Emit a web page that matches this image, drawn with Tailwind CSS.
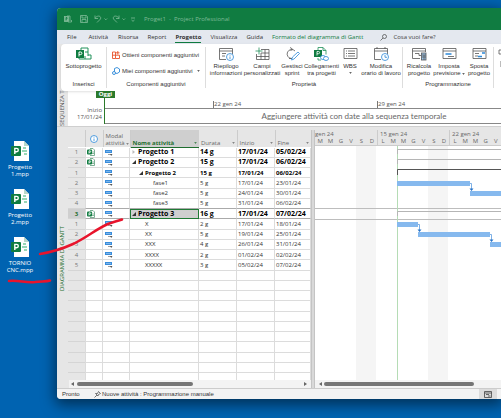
<!DOCTYPE html>
<html lang="it">
    <head>
        <meta charset="UTF-8">
        <title>Proget1 - Project Professional</title>
        <script src="https://cdn.jsdelivr.net/npm/@tailwindcss/browser@4"></script>
    </head>
    <body class="min-h-screen bg-[#0063b1] flex items-start overflow-hidden font-['Open_Sans','Noto_Sans',sans-serif] text-[6px] leading-[8px] text-[#333]">
        <!-- Shared icons -->
        <svg class="hidden">
            <symbol id="file" viewBox="0 0 18 22">
                <path d="M3 1h10l5 5v15H3z" fill="#fff"/>
                <path d="M13 1v5h5z" fill="#b9d8c9"/>
                <path d="M12 8h3M11 11h5M13 14h3" stroke="#33b06f" stroke-width="1.2"/>
                <rect y="6" width="10" height="10" rx="1" fill="#107c41"/>
                <path d="M3.8 14V8.4h1.8a1.6 1.6 0 0 1 0 3.4H3.8" fill="none" stroke="#fff" stroke-width="1.4"/>
            </symbol>
            <symbol id="sub" viewBox="0 0 16 14">
                <path d="M5 5V1h7v8M9 5h3M9 9v3h6V8h-3M3 9v3h6" fill="none" stroke="#21915a"/>
                <rect y="3" width="8" height="8" fill="#107c41"/>
                <path d="M3 9.5V5h1.600a1.3 1.3 0 0 1 0 2.600H3" fill="none" stroke="#fff"/>
            </symbol>
            <symbol id="insert" viewBox="0 0 8 8">
                <path d="M3 .5h3l1.500 1.500v5.500H3" fill="#fff" stroke="#5c9c7a" stroke-width=".8"/>
                <path d="M5 4h2M5 5.500h2" stroke="#5c9c7a" stroke-width=".7"/>
                <rect y="1.500" width="5" height="5" rx="1" fill="#107c41"/>
                <path d="M2 5.500V2.800h1a.7.7 0 0 1 0 1.500H2" fill="none" stroke="#fff" stroke-width=".8"/>
            </symbol>
            <symbol id="auto" viewBox="0 0 8 7">
                <rect y="1" width="7" height="3" fill="#3a8ddb"/>
                <path d="M1 2.500h5" stroke="#a9d0f5" stroke-width=".6"/>
                <path d="M3 5.500h4" stroke="#8a8a8a" stroke-width=".8"/>
                <path d="M5 5h2.500L6.200 7z" fill="#555"/>
            </symbol>
            <symbol id="down" viewBox="0 0 4 3"><path d="M0 .5h4L2 2.700z" fill="currentColor"/></symbol>
        </svg>

        <!-- Desktop -->
        <nav class="w-[57px] shrink-0 pl-1 pt-[140px] flex flex-col gap-[10px] text-white text-center">
            <a href="#" class="w-8 h-[38px] flex flex-col items-center leading-[7px]"><svg class="w-[18px] h-[22px] mb-[2px] shrink-0"><use href="#file"/></svg>Progetto<br>1.mpp</a>
            <a href="#" class="w-8 h-[38px] flex flex-col items-center leading-[7px]"><svg class="w-[18px] h-[22px] mb-[2px] shrink-0"><use href="#file"/></svg>Progetto<br>2.mpp</a>
            <a href="#" class="w-8 h-[38px] flex flex-col items-center leading-[7px]"><svg class="w-[18px] h-[22px] mb-[2px] shrink-0"><use href="#file"/></svg>TORNIO<br>CNC.mpp</a>
        </nav>

        <!-- Window -->
        <main class="mt-2 grow min-w-0 rounded-l-[4px] overflow-hidden bg-[#e6e6e6] shadow-[0_4px_14px_2px_rgba(0,0,0,0.5)]">
            <!-- Title bar -->
            <header class="h-[22px] bg-[#107c41] pl-[7px] flex items-center text-[#7fbb98]">
                <svg class="w-2 h-2 mr-2" viewBox="0 0 8 8" fill="none" stroke="currentColor" stroke-width=".8"><path d="M3 1h3v5M4 7h3.500V5"/><rect x=".5" y="1.500" width="4" height="5" fill="currentColor"/><path d="M2 5.500v-3h1v1.500H2" stroke="#107c41"/></svg>
                <svg class="w-2 h-2 mr-[6px]" viewBox="0 0 8 8" fill="none" stroke="currentColor" stroke-width=".8"><path d="M.5.500h6l1 1v6h-7zM2 .5v2.500h4V.5M2 7.500v-3h4v3"/></svg>
                <svg class="w-[14px] h-2 mr-1" viewBox="0 0 14 8" fill="none" stroke="currentColor" stroke-width=".8"><path d="M1 .5V3.500h3M1 3.500C3-.5 8 1 6.500 4L3 7.500M10.500 3.500l1.300 1.300 1.300-1.300"/></svg>
                <svg class="w-[14px] h-2 mr-1" viewBox="0 0 14 8" fill="none" stroke="currentColor" stroke-width=".8"><path d="M7 .5V3.500H4M7 3.500C5-.5 0 1 1.500 4L5 7.500M10.500 3.500l1.300 1.300 1.300-1.300"/></svg>
                <svg class="w-[6px] h-2 mr-2" viewBox="0 0 6 8" fill="none" stroke="currentColor" stroke-width=".8"><path d="M1 3h4M1.500 5L3 6.300 4.500 5"/></svg>
                <h1 class="whitespace-pre">Proget1  -  Project Professional</h1>
            </header>

            <!-- Ribbon tabs -->
            <nav class="h-[14px] bg-[#e4e8ef] pl-[10px] flex items-center whitespace-nowrap">
                <button class="mr-3">File</button>
                <button class="mr-[10px]">Attività</button>
                <button class="mr-[9px]">Risorsa</button>
                <button class="mr-[9px]">Report</button>
                <button class="mr-[9px] h-3 font-bold border-b border-[#107c41]">Progetto</button>
                <button class="mr-[9px]">Visualizza</button>
                <button class="mr-[9px]">Guida</button>
                <button class="mr-[17px] text-[#107c41]">Formato del diagramma di Gantt</button>
                <svg class="w-[7px] h-[7px] mr-[6px]" viewBox="0 0 7 7" fill="none" stroke="#444" stroke-width=".7"><circle cx="4.500" cy="2.500" r="2"/><path d="M3 4L.5 6.500"/></svg>
                <input type="text" aria-label="Cerca" placeholder="Cosa vuoi fare?" class="w-20 placeholder:text-[#444] outline-none">
            </nav>

            <!-- Ribbon -->
            <section class="ml-1 h-[47px] bg-white rounded-l-[4px] shadow flex py-[3px] overflow-hidden text-center leading-[7px] font-['Liberation_Sans',sans-serif] relative">
                <div class="w-[46px] shrink-0 border-r border-[#ddd] flex flex-col justify-between">
                    <button class="flex flex-col items-center gap-[2px]"><svg class="w-4 h-[14px]"><use href="#sub"/></svg>Sottoprogetto</button>
                    <h2>Inserisci</h2>
                </div>
                <div class="w-[99px] shrink-0 border-r border-[#ddd] flex flex-col justify-between">
                    <div class="pl-[5px] pt-1 flex flex-col gap-2">
                        <button class="flex items-center gap-[2px]"><svg class="w-2 h-2" viewBox="0 0 8 8" fill="none" stroke="#e8532b" stroke-width=".9"><path d="M.5 1h3v6.500h-3zM.5 4.200h7v3.300h-4M5.800 0v3.500M4 1.800h3.500"/></svg>Ottieni componenti aggiuntivi</button>
                        <button class="flex items-center gap-[2px]"><svg class="w-2 h-2" viewBox="0 0 8 8" fill="none" stroke="#2b88d8" stroke-width=".9"><path d="M2.500 4.500V1.500L5 .5l2.500 1.500v3L5 6.500 3.500 6"/><circle cx="2" cy="6" r="1.500"/></svg>Miei componenti aggiuntivi<svg class="w-[3px] h-[2px] ml-[2px]"><use href="#down"/></svg></button>
                    </div>
                    <h2>Componenti aggiuntivi</h2>
                </div>
                <div class="w-[197px] shrink-0 border-r border-[#ddd] flex flex-col justify-between">
                    <div class="pl-[3px] flex items-start">
                        <button class="w-[34px] flex flex-col items-center gap-[2px]"><svg class="w-[15px] h-[14px]" viewBox="0 0 15 14" fill="none" stroke="#555" stroke-width=".8"><path d="M7 12.500H.5V1.500h13V7M.5 4h13M3 6.500h4M3 9h3"/><circle cx="11" cy="10" r="3.500" stroke="#2b88d8" fill="#fff"/><path d="M11 9.500v2.500M11 7.800v.8" stroke="#2b88d8"/></svg>Riepilogo<br>informazioni</button>
                        <button class="w-[38px] flex flex-col items-center gap-[2px]"><svg class="w-[15px] h-[14px]" viewBox="0 0 15 14" fill="none" stroke="#555" stroke-width=".8"><path d="M6 2.500h8v10H1.500V7M1.500 9.500H14M6 6H14M6 6v6.500M10 2.500v10"/><path d="M4 .5v7M.5 4h7" stroke="#21915a"/></svg>Campi<br>personalizzati</button>
                        <button class="w-[22px] flex flex-col items-center gap-[2px]"><svg class="w-[15px] h-[14px]" viewBox="0 0 15 14" fill="none" stroke="#555" stroke-width=".8"><path d="M6.500 11.500A4.500 4.500 0 1 1 10 4M5 .5l2.500 1.500L5.500 4M4 11.500h3"/><path d="M6.500 13l1-3 5.500-5 1.500 1.500L9 12z" stroke="#2b88d8"/></svg>Gestisci<br>sprint</button>
                        <button class="w-[37px] flex flex-col items-center gap-[2px]"><svg class="w-[15px] h-[14px]" viewBox="0 0 15 14" fill="none" stroke="#21915a" stroke-width=".8"><path d="M4 3V.5h5l3 3v4M9 .5v3h3M4 11v2h3"/><rect y="3" width="8" height="7" fill="#107c41" stroke="none"/><path d="M3 8.500v-4h1.500a1 1 0 0 1 0 2.200H3" stroke="#fff"/><g stroke="#2b88d8" fill="#fff"><ellipse cx="9" cy="10.500" rx="2.500" ry="2"/><ellipse cx="12" cy="11.500" rx="2.500" ry="2"/></g></svg>Collegamenti<br>tra progetti</button>
                        <button class="w-5 flex flex-col items-center gap-[2px]"><svg class="w-[15px] h-[14px]" viewBox="0 0 15 14" fill="none" stroke="#555" stroke-width=".8"><path d="M1 1.500h13v10H1zM3 4h1M5 4h7M3 6.500h1M5 6.500h7M3 9h1M5 9h7"/></svg>WBS<svg class="w-[3px] h-[2px]"><use href="#down"/></svg></button>
                        <button class="w-[42px] flex flex-col items-center gap-[2px]"><svg class="w-[15px] h-[14px]" viewBox="0 0 15 14" fill="none" stroke="#555" stroke-width=".8"><path d="M7 12.500H.5V1.500h13V7M.5 4h13M3 0v2M11 0v2"/><circle cx="11" cy="10" r="3.500" stroke="#2b88d8" fill="#fff"/><path d="M11 8v2.300h2" stroke="#2b88d8"/></svg>Modifica<br>orario di lavoro</button>
                    </div>
                    <h2>Proprietà</h2>
                </div>
                <div class="w-[91px] shrink-0 border-r border-[#ddd] flex flex-col justify-between">
                    <div class="pl-[2px] flex items-start">
                        <button class="w-7 flex flex-col items-center gap-[2px]"><svg class="w-[15px] h-[14px]" viewBox="0 0 15 14" fill="none" stroke="#555" stroke-width=".8"><path d="M8 11.500H.5V1.500h13V5M.5 4h13M3 6.500h4v2h2"/><rect x="9.500" y="6" width="4.500" height="7" fill="#9ac3e8"/><path d="M10 8h4M10 10h4M12 8v5"/></svg>Ricalcola<br>progetto</button>
                        <button class="w-[32px] flex flex-col items-center gap-[2px]"><svg class="w-[15px] h-[14px]" viewBox="0 0 15 14" fill="none" stroke="#555" stroke-width=".8"><path d="M1 1.500h13v10H1zM1 4h13M6 9.500h6"/><path d="M3.500 7h6" stroke="#2b88d8" stroke-width="1.500"/></svg><span class="-mb-[2px]">Imposta</span><span class="flex items-center gap-px">previsione<svg class="w-[3px] h-[2px]"><use href="#down"/></svg></span></button>
                        <button class="w-7 flex flex-col items-center gap-[2px]"><svg class="w-[15px] h-[14px]" viewBox="0 0 15 14" fill="none" stroke="#555" stroke-width=".8"><path d="M1 1.500h13v10H1zM1 4h13M3 6.500h4M3 9h3"/><path d="M10 6h3M6 9.500h4" stroke="#2b88d8" stroke-width="1.500"/></svg>Sposta<br>progetto</button>
                    </div>
                    <h2>Programmazione</h2>
                </div>
                <svg class="w-5 h-[30px] shrink-0 ml-1" viewBox="0 0 20 30" fill="none" stroke="#555" stroke-width=".8"><path d="M1 3h8v4H1zM3 14h8v6H3z"/></svg>
            </section>

            <!-- Timeline -->
            <section class="flex h-9 border-b border-[#cfcfcf]">
                <h2 class="w-[11px] shrink-0 rotate-180 [writing-mode:vertical-rl] leading-[11px] text-[#555] whitespace-nowrap">SEQUENZA T</h2>
                <div class="w-9 shrink-0 bg-white pt-4 pr-[2px] text-right leading-[7px] text-[#555]">Inizio<br>17/01/24</div>
                <div class="grow min-w-0 bg-white relative">
                    <span class="absolute left-[-8px] top-0 w-[19px] h-[7px] bg-[#2b7a2b] text-white font-bold text-center leading-[7px]">Oggi</span>
                    <div class="ml-px h-[18px] pt-[10px] flex border-b border-[#888] text-[#555]">
                        <span class="ml-[108px] w-[164px] h-[7px] border-l border-[#777] leading-[7px]">22 gen 24</span>
                        <span class="h-[7px] border-l border-[#777] leading-[7px]">29 gen 24</span>
                    </div>
                    <p class="ml-px h-[15px] border-b border-[#888] text-center font-[Lato,sans-serif] text-[8px] leading-[14px] text-[#666] pl-[102px]">Aggiungere attività con date alla sequenza temporale</p>
                    <i class="absolute left-0 top-[7px] w-px h-[26px] bg-[#2b7a2b]"></i>
                </div>
            </section>

            <!-- Gantt diagram -->
            <section class="mt-[3px] h-[258px] flex overflow-hidden">
                <h2 class="w-[11px] shrink-0 rotate-180 [writing-mode:vertical-rl] text-center leading-[11px] text-[#1f6e2f] whitespace-nowrap">DIAGRAMMA DI GANTT</h2>

                <div class="w-[243px] shrink-0 flex flex-col">
                    <div class="h-[250px] overflow-hidden">
                        <table class="w-full table-fixed border-collapse bg-white whitespace-nowrap">
                            <colgroup><col class="w-[17px]"><col class="w-[18px]"><col class="w-[27px]"><col class="w-[69px]"><col class="w-[38px]"><col class="w-[38px]"><col class="w-[36px]"></colgroup>
                            <thead class="bg-[#e6e6e6] text-[#666] text-left">
                                <tr class="h-[17px] align-bottom">
                                    <th class="p-0"></th>
                                    <th class="p-0 border-x border-[#ccc] align-middle"><svg class="w-2 h-2 mx-auto" viewBox="0 0 8 8" fill="#fff" stroke="#2b88d8" stroke-width=".8"><circle cx="4" cy="4" r="3.500"/><path d="M4 3.500v2.500M4 1.800v.8"/></svg></th>
                                    <th class="p-0 pl-[2px] font-normal leading-[7px] border-r border-[#ccc]">Modal<span class="flex items-center gap-px">attività<svg class="w-[3px] h-[2px]"><use href="#down"/></svg></span></th>
                                    <th class="p-0 px-[2px] bg-[#cfcfcf] text-[#1f6e2f] border-b border-[#1f6e2f]"><span class="flex justify-between items-center">Nome attività<svg class="w-[3px] h-[2px]"><use href="#down"/></svg></span></th>
                                    <th class="p-0 px-[2px] font-normal border-r border-[#ccc]"><span class="flex justify-between items-center">Durata<svg class="w-[3px] h-[2px]"><use href="#down"/></svg></span></th>
                                    <th class="p-0 px-[2px] font-normal border-r border-[#ccc]"><span class="flex justify-between items-center">Inizio<svg class="w-[3px] h-[2px]"><use href="#down"/></svg></span></th>
                                    <th class="p-0 px-[2px] font-normal"><span class="flex justify-between items-center">Fine<svg class="w-[3px] h-[2px]"><use href="#down"/></svg></span></th>
                                </tr>
                            </thead>
                        </table>
                        <table class="w-full h-[236px] table-fixed border-separate border-spacing-0 bg-white whitespace-nowrap leading-[8px] text-[#333]">
                            <colgroup><col class="w-[17px]"><col class="w-[18px]"><col class="w-[27px]"><col class="w-[69px]"><col class="w-[38px]"><col class="w-[38px]"><col class="w-[36px]"></colgroup>
                            <tbody id="tasks"></tbody>
                        </table>
                    </div>
                    <div class="h-2 flex items-center bg-[#f3f3f3] ml-px pl-[2px] pr-1">
                        <svg class="w-[3px] h-1" viewBox="0 0 3 4"><path d="M3 0v4L0 2z" fill="#666"/></svg>
                        <i class="ml-[3px] w-[116px] h-1 rounded-full bg-[#757575]"></i>
                        <svg class="w-[3px] h-1 ml-auto" viewBox="0 0 3 4"><path d="M0 0v4l3-2z" fill="#666"/></svg>
                    </div>
                </div>

                <div class="w-1 shrink-0 bg-[#d9d9d9] border-x border-[#c4c4c4]"></div>

                <div class="grow min-w-0 flex flex-col">
                    <div class="h-4 flex shrink-0 overflow-hidden text-[#666] border-b border-[#ccc]">
                        <div class="w-[62px] shrink-0">
                            <p>gen 24</p>
                            <p class="grid grid-cols-6 text-center leading-[7px]"><span>M</span><span>M</span><span>G</span><span>V</span><span>S</span><span>D</span></p>
                        </div>
                        <div class="w-[72px] shrink-0 border-l border-[#ccc]">
                            <p class="pl-[2px]">15 gen 24</p>
                            <p class="grid grid-cols-7 text-center leading-[7px]"><span>L</span><span>M</span><span>M</span><span>G</span><span>V</span><span>S</span><span>D</span></p>
                        </div>
                        <div class="w-[52px] shrink-0 border-l border-[#ccc]">
                            <p class="pl-[2px]">22 gen 24</p>
                            <p class="grid grid-cols-5 text-center leading-[7px]"><span>L</span><span>M</span><span>M</span><span>G</span><span>V</span></p>
                        </div>
                    </div>
                    <div class="h-[234px] bg-white overflow-hidden">
                        <svg class="w-[1600px] h-[234px] max-w-none" viewBox="0 0 1600 234">
                            <path d="M41 0h20v234H41zM113 0h20v234h-20z" fill="#f5f5f5"/>
                            <path d="M0 62.500h1600M0 73.500h1600" stroke="#bdbdbd"/>
                            <path d="M82.500 0v234" stroke="#b5dcb5"/>
                            <path d="M82.500 8V3.500H1600M82.500 18v-4.500H1600M82.500 70v-4.500H1600" fill="none" stroke="#b5b5b5"/>
                            <path d="M82.500 29v-5.500H1600" fill="none" stroke="#555"/>
                            <path d="M82 35h73v5H82zM155 45h73v5h-73zM82 76h21v5H82zM103 86h72v5h-72zM175 96h60v5h-60z" fill="#86b9ee"/>
                            <path d="M155 37.500h1.500V44M103 78.500h1.500V85M175 88.500h1.500V95" fill="none" stroke="#5d9ddf" stroke-width=".8"/>
                            <path d="M154.500 42.500h4l-2 2.500zM102.500 83.500h4l-2 2.500zM174.500 93.500h4l-2 2.500z" fill="#2472c8"/>
                        </svg>
                    </div>
                    <div class="h-2 flex items-center bg-[#f3f3f3] pl-1">
                        <svg class="w-[3px] h-1 shrink-0" viewBox="0 0 3 4"><path d="M3 0v4L0 2z" fill="#666"/></svg>
                        <i class="ml-[2px] w-[150px] h-1 rounded-full bg-[#757575]"></i>
                    </div>
                </div>
            </section>

            <!-- Status bar -->
            <footer class="h-[11px] bg-[#f3f3f3] border-t border-[#ccc] pl-[5px] pr-1 flex items-center font-['Liberation_Sans',sans-serif]">
                <span class="w-8">Pronto</span>
                <svg class="w-[7px] h-[7px] mr-px" viewBox="0 0 7 7" fill="none" stroke="#444" stroke-width=".7"><path d="M.5 6.500L3 4M1.500 2.500L4 5l.5-1.500 2-1L4.500.5l-1 2z"/></svg>
                <span>Nuove attività : Programmazione manuale</span>
                <button aria-label="Diagramma di Gantt" class="ml-auto w-[18px] h-[10px] bg-[#dcdcdc] flex items-center justify-center"><svg class="w-2 h-[7px]" viewBox="0 0 8 7" fill="none" stroke="#444" stroke-width=".8"><path d="M.5.500h7v6h-7zM.5 2h7M2 3.500h3M4 5h2.500"/></svg></button>
            </footer>
        </main>

        <!-- Pen marks -->
        <svg class="absolute left-0 top-0 w-[130px] h-[290px] pointer-events-none" viewBox="0 0 130 290" fill="none" stroke="#e8142c" stroke-linecap="round">
            <path d="M40 254C52 252 62 249 73 244C88 237 96 229 108 224C113 222 118 221 122 219.500" stroke-width="2.500"/>
            <path d="M9 281C18 280 26 283 35 282C41 281 46 282 50 280.500" stroke-width="2.500"/>
        </svg>

        <script>
            // number, linked file, name, duration, start, finish, level
            const tasks = [
                [1, 1, 'Progetto 1', '14 g', '17/01/24', '05/02/24', 0],
                [2, 1, 'Progetto 2', '15 g', '17/01/24', '06/02/24', 0],
                [1, 0, 'Progetto 2', '15 g', '17/01/24', '06/02/24', 1],
                [2, 0, 'fase1', '5 g', '17/01/24', '23/01/24', 3],
                [3, 0, 'fase2', '5 g', '24/01/24', '30/01/24', 3],
                [4, 0, 'fase3', '5 g', '31/01/24', '06/02/24', 3],
                [3, 1, 'Progetto 3', '16 g', '17/01/24', '07/02/24', 0],
                [1, 0, 'X', '2 g', '17/01/24', '18/01/24', 2],
                [2, 0, 'XX', '5 g', '19/01/24', '25/01/24', 2],
                [3, 0, 'XXX', '4 g', '26/01/24', '31/01/24', 2],
                [4, 0, 'XXXX', '2 g', '01/02/24', '02/02/24', 2],
                [5, 0, 'XXXXX', '3 g', '05/02/24', '07/02/24', 2],
            ]
            while (tasks.length < 23) tasks.push(['', 0, '', '', '', '', 2])
            const indent = ['pl-[2px]', 'pl-[9px]', 'pl-[15px]', 'pl-[23px]']
            document.getElementById('tasks').innerHTML = tasks.map(([n, file, name, dur, start, end, level], i) => {
                const sel = i == 6
                const weight = level == 0 ? 'font-bold text-black text-[7px]' : level == 1 ? 'font-bold text-black' : ''
                const line = sel || i == 5 ? 'border-[#dcdcdc] border-b-[#aaa]' : 'border-[#dcdcdc]'
                const cell = `p-0 border-r border-b ${line}`
                const arrow = level > 1 ? '' : `<svg class="inline w-1 h-1 mr-[2px] align-baseline" viewBox="0 0 4 4"><path d="${i ? 'M4 0v4H0z' : 'M.5 0v4L3 2z'}" fill="${i ? '#333' : '#bbb'}"/></svg>`
                return `<tr class="h-[10px]">
                    <td class="p-0 text-center border-b border-[#d5d5d5] ${sel ? 'bg-[#cfcfcf] font-bold text-[#1f6e2f]' : 'bg-[#e6e6e6] text-[#777]'}">${n}</td>
                    <td class="${cell} border-l">${file ? '<svg class="block w-2 h-2 ml-px"><use href="#insert"/></svg>' : ''}</td>
                    <td class="${cell}">${n ? '<svg class="block w-2 h-[7px] ml-[2px]"><use href="#auto"/></svg>' : ''}</td>
                    <td class="${sel ? 'p-0 bg-[#cfcfcf] outline outline-[#1f7a35] -outline-offset-1' : cell} ${weight} ${indent[level]}">${arrow}${name}</td>
                    <td class="${cell} ${weight} pl-px">${dur}</td>
                    <td class="${cell} ${weight} pl-px">${start}</td>
                    <td class="${cell} ${weight} pl-px">${end}</td>
                </tr>`
            }).join('')
        </script>
    </body>
</html>
